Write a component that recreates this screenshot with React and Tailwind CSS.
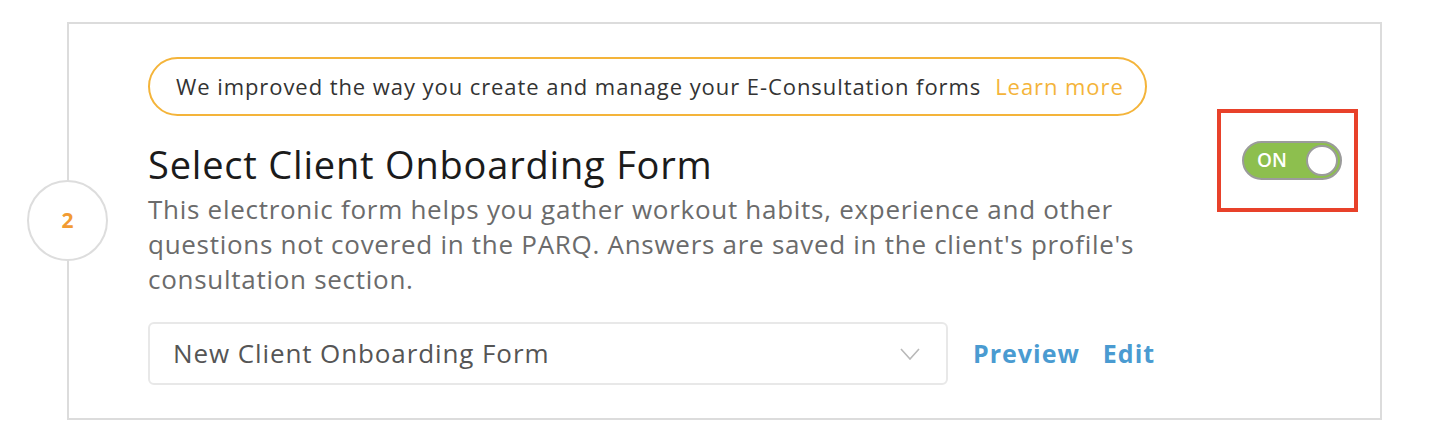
import React from "react";

function StepBadge({ n }) {
  return (
    <div className="absolute left-[-42px] top-[156px] flex h-[81px] w-[81px] items-center justify-center rounded-full border-2 border-[#dddddd] bg-white">
      <span className="text-[21px] font-bold text-[#f29b32]">{n}</span>
    </div>
  );
}

function Toggle() {
  return (
    <div className="flex h-[39px] w-[100px] items-center justify-between rounded-full border-2 border-[#9b9b9b] bg-[#8dbf4e] pl-[13px] pr-[2px]">
      <span className="text-[19px] font-semibold leading-none text-white">ON</span>
      <span className="h-[31px] w-[32px] rounded-full border-2 border-[#9b9b9b] bg-white" />
    </div>
  );
}

function Chevron() {
  return (
    <svg width="20" height="12" viewBox="0 0 20 12" fill="none">
      <path d="M1 1l9 10 9-10" stroke="#b9b9b9" strokeWidth="1.6" />
    </svg>
  );
}

export default function App() {
  return (
    <div className="min-h-[440px] bg-white pt-[22px] pl-[67px] font-['Open_Sans',sans-serif]">
      <div className="relative flex h-[398px] w-[1315px] border-2 border-[#dcdcdc] bg-white">
        <StepBadge n={2} />
        <div className="flex flex-1 flex-col pl-[79px] pt-[33px]">
          <div className="flex h-[59px] w-[999px] items-center gap-[14px] whitespace-nowrap rounded-full border-2 border-[#f4b43a] pl-[26px] pr-[16px] text-[22px] tracking-[0.93px]">
            <span className="text-[#333333]">We improved the way you create and manage your E-Consultation forms</span>
            <span className="text-[#f4b43a]">Learn more</span>
          </div>
          <h2 className="mt-[25px] text-[38px] leading-[46px] font-normal tracking-[0.8px] text-[#1b1b1b]">
            Select Client Onboarding Form
          </h2>
          <p className="mt-[5px] w-[1010px] text-[26px] leading-[35px] tracking-[0.72px] text-[#6b6b6b]">
            This electronic form helps you gather workout habits, experience and other
            <br />
            questions not covered in the PARQ. Answers are saved in the client's profile's
            <br />
            consultation section.
          </p>
          <div className="mt-[25px] flex items-center">
            <div className="flex h-[63px] w-[800px] items-center justify-between rounded-[6px] border-2 border-[#e8e8e8] pl-[23px] pr-[26px]">
              <span className="text-[26px] tracking-[0.9px] text-[#555555]">New Client Onboarding Form</span>
              <Chevron />
            </div>
            <a className="ml-[25px] text-[25px] font-bold tracking-[1px] text-[#4a9bd1]">Preview</a>
            <a className="ml-[23px] text-[25px] font-bold tracking-[1px] text-[#4a9bd1]">Edit</a>
          </div>
        </div>
        <div className="pt-[85px] pr-[22px]">
          <div className="h-[103px] w-[141px] border-4 border-[#e8412a] pl-[21px] pt-[28px]">
            <Toggle />
          </div>
        </div>
      </div>
    </div>
  );
}
